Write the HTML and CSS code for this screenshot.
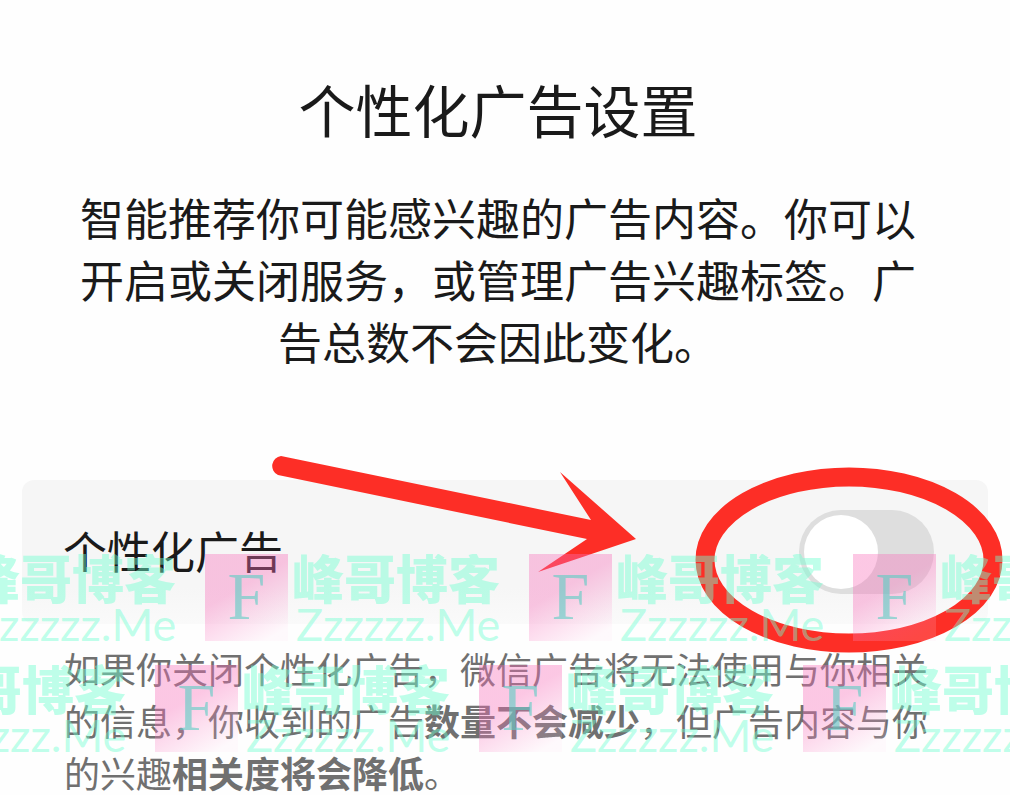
FILE: index.html
```
<!DOCTYPE html>
<html lang="zh-CN">
<head>
  <meta charset="UTF-8">
  <meta name="viewport" content="width=device-width, initial-scale=1.0">
  <title>个性化广告设置</title>
  <link rel="stylesheet" href="styles.css">
</head>
<body>
  <main class="page">
    <header class="intro">
      <h1>个性化广告设置</h1>
      <p>智能推荐你可能感兴趣的广告内容。你可以开启或关闭服务，或管理广告兴趣标签。广告总数不会因此变化。</p>
    </header>

    <section class="setting">
      <label for="adSwitch">个性化广告</label>
      <input type="checkbox" role="switch" id="adSwitch" class="switch">

      <!-- Arrow and circle around the switch -->
      <svg class="marker" viewBox="0 0 740 200" aria-hidden="true">
        <path d="M13 6 L323 70 L292 22 L368 89 L270 122 L319 89 L10 25 A10 10 0 0 1 13 6 Z" fill="#fd2e26"/>
        <ellipse cx="581" cy="110" rx="144" ry="83" fill="none" stroke="#fd2e26" stroke-width="19"/>
      </svg>
    </section>

    <p class="note">如果你关闭个性化广告，微信广告将无法使用与你相关的信息，你收到的广告<strong>数量不会减少</strong>，但广告内容与你的兴趣<strong>相关度将会降低</strong>。</p>

    <!-- Watermark -->
    <div class="watermark" aria-hidden="true">
      <div class="watermark-row">
        <div class="mark"><span class="logo">F</span><span class="brand"><b>峰哥博客</b><i>Zzzzzz.Me</i></span></div>
        <div class="mark"><span class="logo">F</span><span class="brand"><b>峰哥博客</b><i>Zzzzzz.Me</i></span></div>
        <div class="mark"><span class="logo">F</span><span class="brand"><b>峰哥博客</b><i>Zzzzzz.Me</i></span></div>
        <div class="mark"><span class="logo">F</span><span class="brand"><b>峰哥博客</b><i>Zzzzzz.Me</i></span></div>
      </div>
      <div class="watermark-row shifted">
        <div class="mark"><span class="logo">F</span><span class="brand"><b>峰哥博客</b><i>Zzzzzz.Me</i></span></div>
        <div class="mark"><span class="logo">F</span><span class="brand"><b>峰哥博客</b><i>Zzzzzz.Me</i></span></div>
        <div class="mark"><span class="logo">F</span><span class="brand"><b>峰哥博客</b><i>Zzzzzz.Me</i></span></div>
        <div class="mark"><span class="logo">F</span><span class="brand"><b>峰哥博客</b><i>Zzzzzz.Me</i></span></div>
      </div>
    </div>
  </main>
</body>
</html>
```
FILE: styles.css
```
* {
  box-sizing: border-box;
}
body {
  margin: 0;
  background: #fefefe;
  color: #1a1a1a;
  font-family: "Noto Sans CJK SC", sans-serif;
}
.page {
  position: relative;
  overflow: hidden;
  padding: 76px 22px 0;
}
.intro {
  padding: 0 70px 0 56px;
  text-align: center;
}
h1 {
  margin: 0;
  font-size: 57px;
  font-weight: 400;
  line-height: 64px;
}
.intro p {
  margin: 46px 0 0;
  font-size: 44px;
  line-height: 62px;
}
.setting {
  position: relative;
  display: flex;
  align-items: center;
  justify-content: space-between;
  min-height: 144px;
  margin-top: 108px;
  padding: 0 54px 0 41px;
  border-radius: 12px;
  background: linear-gradient(#f6f6f6 75%, #fafafa);
}
.setting label {
  padding-bottom: 4px;
  font-size: 44px;
  line-height: 62px;
}
.switch {
  appearance: none;
  width: 135px;
  height: 84px;
  margin: 0;
  padding: 5px;
  border-radius: 42px;
  background: #dedede;
}
.switch::before {
  content: "";
  display: block;
  width: 74px;
  height: 74px;
  border-radius: 50%;
  background: #fff;
}
.switch:checked {
  background: #07c160;
}
.switch:checked::before {
  margin-left: auto;
}
.marker {
  position: absolute;
  top: -30px;
  right: -20px;
  width: 740px;
  height: 200px;
  overflow: visible;
  pointer-events: none;
}
.note {
  margin: 18px 0 0;
  padding: 0 48px 0 42px;
  color: #707070;
  font-size: 36px;
  line-height: 52px;
}
.note strong {
  font-weight: 700;
}
.watermark {
  position: absolute;
  top: 554px;
  left: 0;
  right: 0;
  overflow: hidden;
  padding-bottom: 12px;
  pointer-events: none;
}
.watermark-row {
  display: flex;
  margin-left: -119px;
}
.watermark-row.shifted {
  margin-top: 24px;
  margin-left: -169px;
}
.mark {
  display: flex;
  flex: 0 0 324px;
  gap: 4px;
  height: 87px;
}
.logo {
  width: 83px;
  background: linear-gradient(150deg, rgba(248, 110, 185, 0.38) 40%, rgba(255, 220, 240, 0.15) 90%);
  color: rgba(90, 205, 195, 0.6);
  font-family: "Liberation Serif", serif;
  font-size: 68px;
  line-height: 84px;
  text-align: center;
}
.brand {
  color: rgba(113, 255, 209, 0.45);
  white-space: nowrap;
}
.brand b,
.brand i {
  display: block;
  font-style: normal;
}
.brand b {
  font-size: 52px;
  font-weight: 900;
  line-height: 46px;
}
.brand i {
  padding-left: 4px;
  font-family: Lato, sans-serif;
  font-size: 45px;
  line-height: 48px;
}
```
